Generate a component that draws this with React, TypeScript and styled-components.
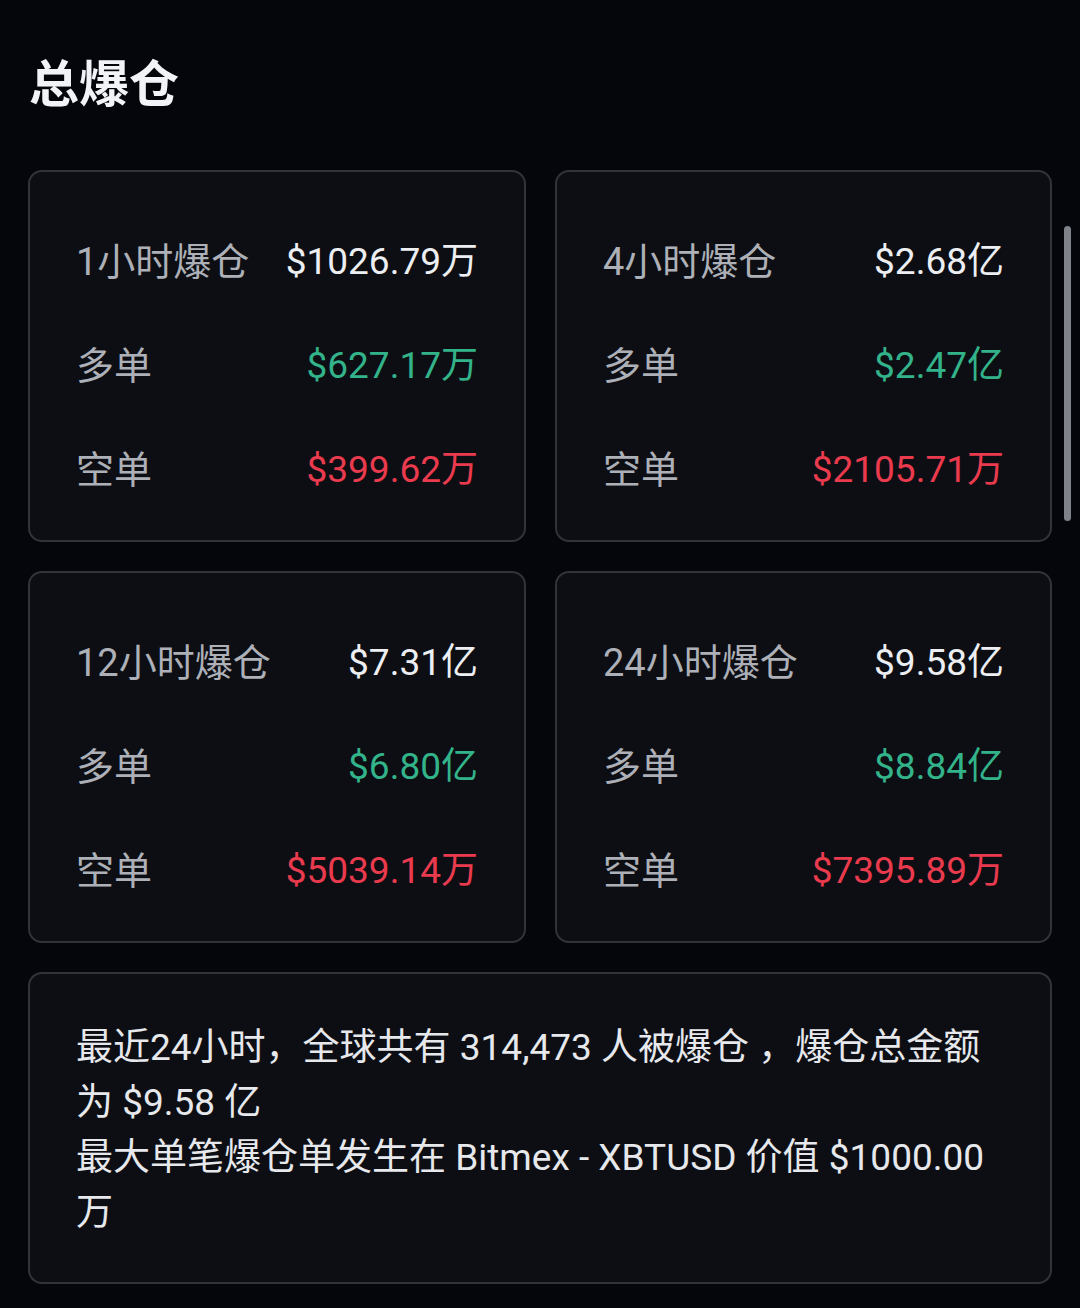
import React from "react";
import styled, { createGlobalStyle } from "styled-components";

const Global = createGlobalStyle`
  html, body { margin: 0; padding: 0; background: #05060b; }
  body { font-family: Roboto, "Noto Sans CJK SC", sans-serif; }
`;

const Page = styled.div`
  position: relative;
  width: 1080px;
  height: 1308px;
  box-sizing: border-box;
  padding: 50px 28px 0 28px;
  background: #05060b;
  overflow: hidden;
`;

const Title = styled.h1`
  margin: 0 0 60px 1px;
  font-family: "Noto Sans CJK SC", sans-serif;
  font-weight: 700;
  font-size: 50px;
  line-height: 60px;
  color: #f2f3f6;
`;

const Grid = styled.div`
  display: grid;
  grid-template-columns: 498px 497px;
  grid-auto-rows: 372px;
  column-gap: 29px;
  row-gap: 29px;
`;

const Card = styled.div`
  box-sizing: border-box;
  background: #0c0e14;
  border: 2px solid #30333a;
  border-radius: 14px;
`;

const StatCard = styled(Card)`
  padding: 34px 46px 22px 46px;
  display: flex;
  flex-direction: column;
`;

const Row = styled.div`
  height: 104px;
  display: flex;
  align-items: center;
  justify-content: space-between;
`;

const Label = styled.span`
  font-family: Roboto, "Noto Sans CJK SC", sans-serif;
  font-size: 38px;
  color: #adb0b7;
`;

const Value = styled.span<{ $tone: "white" | "green" | "red" }>`
  font-family: Roboto, "Noto Sans CJK SC", sans-serif;
  font-size: 37px;
  color: ${(p) =>
    p.$tone === "green" ? "#33b389" : p.$tone === "red" ? "#ea3b4e" : "#eceef2"};
`;

const SummaryCard = styled(Card)`
  margin-top: 29px;
  height: 312px;
  padding: 46px 48px 40px 46px;
`;

const Para = styled.p`
  margin: 0;
  font-family: Roboto, "Noto Sans CJK SC", sans-serif;
  font-size: 37px;
  line-height: 55px;
  color: #e6e8ec;
`;

const Scrollbar = styled.div`
  position: absolute;
  right: 9px;
  top: 226px;
  width: 7px;
  height: 295px;
  border-radius: 4px;
  background: #7f8288;
`;

type Stat = {
  period: string;
  total: string;
  long: string;
  short: string;
};

const stats: Stat[] = [
  { period: "1小时爆仓", total: "$1026.79万", long: "$627.17万", short: "$399.62万" },
  { period: "4小时爆仓", total: "$2.68亿", long: "$2.47亿", short: "$2105.71万" },
  { period: "12小时爆仓", total: "$7.31亿", long: "$6.80亿", short: "$5039.14万" },
  { period: "24小时爆仓", total: "$9.58亿", long: "$8.84亿", short: "$7395.89万" },
];

export default function App() {
  return (
    <>
      <Global />
      <Page>
        <Title>总爆仓</Title>
        <Grid>
          {stats.map((s) => (
            <StatCard key={s.period}>
              <Row>
                <Label>{s.period}</Label>
                <Value $tone="white">{s.total}</Value>
              </Row>
              <Row>
                <Label>多单</Label>
                <Value $tone="green">{s.long}</Value>
              </Row>
              <Row>
                <Label>空单</Label>
                <Value $tone="red">{s.short}</Value>
              </Row>
            </StatCard>
          ))}
        </Grid>
        <SummaryCard>
          <Para>最近24小时，全球共有 314,473 人被爆仓 ，爆仓总金额为 $9.58 亿</Para>
          <Para>最大单笔爆仓单发生在 Bitmex - XBTUSD 价值 $1000.00 万</Para>
        </SummaryCard>
        <Scrollbar />
      </Page>
    </>
  );
}
